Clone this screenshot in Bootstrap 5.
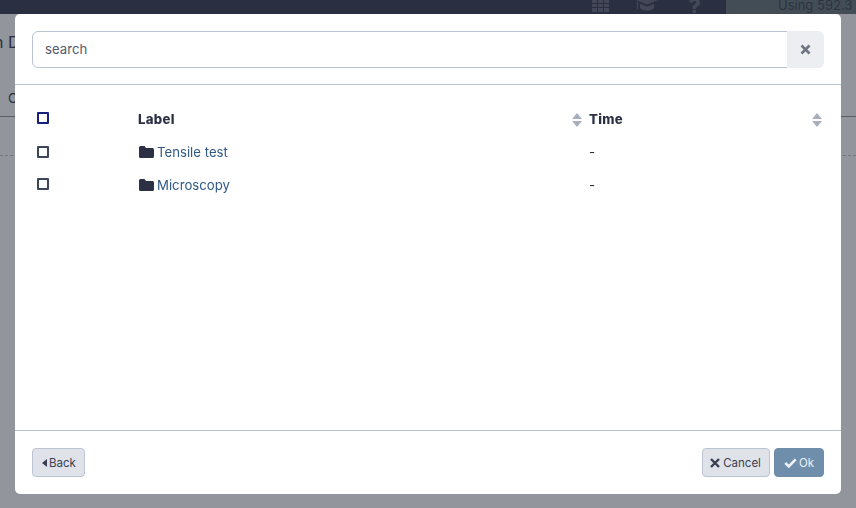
<!DOCTYPE html>
<html lang="en">
<head>
<meta charset="utf-8">
<title>Select</title>
<link rel="stylesheet" href="https://cdn.jsdelivr.net/npm/bootstrap@5.3.0/dist/css/bootstrap.min.css">
<style>
html,body{height:100%;overflow:hidden;}
body{font-family:Inter,"Liberation Sans",sans-serif;font-size:13.2px;color:#2b3044;background:#fff;}
.app-top{height:14px;background:#2e3349;overflow:hidden;}
.app-icons{color:#5f6372;}
.top-ico{display:block;}
.top-ico-grid{margin-right:27px;}
.top-ico-cap{margin-right:31px;}
.top-ico-q{margin-right:26px;}
.quota{width:130px;height:14px;background:#5d6f70;color:#333b4c;padding-left:52px;font-size:13px;line-height:11px;white-space:nowrap;overflow:hidden;}
.app-title{font-size:16px;padding:16px 0 0 0;height:59px;margin-left:-6px;white-space:nowrap;}
.app-tabs{height:44px;padding:16px 0 0 8px;border-bottom:1px solid #8d8f97;}
.app-dots{margin-top:38px;border-top:1px dashed #c2c4c9;}
.shade{position:fixed;inset:0;background:rgba(40,44,60,.5);z-index:1040;}
.sheet{position:fixed;left:15px;top:14px;width:826px;height:480px;z-index:1050;border:0;border-radius:5px;background:#fff;}
.sheet .modal-header{height:71px;padding:17px 17px 16px;border-bottom:1px solid #bcc5d3;}
.sheet .modal-body{padding:17px 17px 0;}
.sheet .modal-footer{height:64px;padding:17px;border-top:1px solid #b6c3cf;}
.sheet .modal-footer>*{margin:0;}
.find-input{height:37px;font-size:13.2px;color:#555a6b;padding:4px 12px 6px;border:1px solid #bcc3d0;border-radius:6px 0 0 6px;}
.find-input::placeholder{color:#555a6b;opacity:1;}
.find-clear{flex:0 0 37px;width:37px;height:37px;padding:0;background:#eceef2;border:0;border-radius:0 6px 6px 0;color:#6f7482;display:flex;align-items:center;justify-content:center;}
.pick-table{table-layout:fixed;width:792px;margin:0;--bs-table-bg:transparent;}
.pick-table th,.pick-table td{border:0;padding:0 6px;vertical-align:middle;height:33px;font-size:13.2px;color:#2b3044;}
.pick-table th{font-weight:800;height:34px;padding-top:2px;letter-spacing:.3px;}
.pick-table td{padding-top:1px;}
.pick-table .w-check{width:100px;padding:0 6px 2px 5px;}
.pick-table tbody tr:last-child .w-check{padding-bottom:4px;}
.pick-table .w-time{width:241px;}
.pick-table a{color:#2f5a85;text-decoration:none;margin-left:3px;}
.pick-box{appearance:none;-webkit-appearance:none;display:block;width:12px;height:12px;margin:0;border:2px solid #3f4558;border-radius:1px;background:#fff;}
.pick-all{border-color:#15207f;}
.sort-ico{display:block;margin-right:-4px;}
.sort-first{margin-right:-5px;}
.folder-ico{vertical-align:-1px;margin-left:1px;}
.act-btn{height:29px;font-size:11.5px;padding:2px 8px 0 7px;display:inline-flex;align-items:center;gap:3px;border-radius:4px;line-height:1;}
.act-btn svg{margin-top:-2px;}
.act-plain{background:#dfe2e8;border:1px solid #bcc5d3;color:#3a3f52;}
.act-back{padding-left:9px;gap:2px;}
.act-ok{background:#6f8eab;border:1px solid #6f8eab;color:#eef2f6;margin-left:4px!important;padding:2px 9px 0 9px;gap:2px;}
.act-plain:hover{background:#dfe2e8;color:#3a3f52;border-color:#bcc5d3;}
.act-ok:hover{background:#6f8eab;color:#eef2f6;border-color:#6f8eab;}
</style>
</head>
<body>
<div class="app-top d-flex justify-content-end align-items-start">
  <div class="app-icons d-flex align-items-start">
    <svg class="top-ico top-ico-grid" width="17" height="12" viewBox="0 0 17 12" fill="currentColor"><rect width="5" height="3"/><rect x="6" width="5" height="3"/><rect x="12" width="5" height="3"/><rect y="4" width="5" height="3"/><rect x="6" y="4" width="5" height="3"/><rect x="12" y="4" width="5" height="3"/><rect y="8" width="5" height="4"/><rect x="6" y="8" width="5" height="4"/><rect x="12" y="8" width="5" height="4"/></svg>
    <svg class="top-ico top-ico-cap" width="22" height="12" viewBox="0 0 22 12" fill="currentColor"><path d="M0 0 11 4.500 22 0zM4 3.800l7 3 7-3V8c-3 3.500-11 3.500-14 0zM1 1.500h1V9H1z"/></svg>
    <svg class="top-ico top-ico-q" width="11" height="13" viewBox="0 0 11 13" fill="currentColor"><path d="M0 1.500C1-1 3-2 5.500-2 9-2 11 0 11 2.500c0 2-1 3-2.500 4C7 7.500 7 8 7 9H3.500c0-2 .5-3.500 2-4.500C6.800 3.600 7.200 3 7.200 2.300 7.200 1.500 6.500 1 5.500 1 4.300 1 3.500 1.700 2.800 3z"/><rect x="3.500" y="10" width="3.500" height="3"/></svg>
  </div>
  <div class="quota">Using 592.3</div>
</div>
<div class="app-title">n Data</div>
<div class="app-tabs">Overview</div>
<div class="app-dots"></div>

<div class="shade"></div>

<div class="modal-content sheet" role="dialog">
  <div class="modal-header">
    <div class="input-group flex-nowrap">
      <input class="form-control find-input" type="text" placeholder="search">
      <button class="btn find-clear" type="button" aria-label="Clear">
        <svg width="11" height="11" viewBox="0 0 11 11"><path d="M1.500 1.500l8 8M9.500 1.500l-8 8" stroke="currentColor" stroke-width="2.600"/></svg>
      </button>
    </div>
  </div>
  <div class="modal-body">
    <table class="table pick-table">
      <colgroup><col class="w-check"><col><col class="w-time"></colgroup>
      <thead>
        <tr>
          <th class="w-check"><input class="pick-box pick-all" type="checkbox" aria-label="All"></th>
          <th><div class="d-flex justify-content-between align-items-center">Label
            <svg class="sort-ico sort-first" width="10" height="14" viewBox="0 0 10 14" fill="#a9b0bd"><path d="M5 0l5 6H0zM5 14l5-6H0z"/></svg></div></th>
          <th><div class="d-flex justify-content-between align-items-center">Time
            <svg class="sort-ico" width="10" height="14" viewBox="0 0 10 14" fill="#a9b0bd"><path d="M5 0l5 6H0zM5 14l5-6H0z"/></svg></div></th>
        </tr>
      </thead>
      <tbody>
        <tr>
          <td class="w-check"><input class="pick-box" type="checkbox" aria-label="Tensile test"></td>
          <td><svg class="folder-ico" width="15" height="12" viewBox="0 0 15 12" fill="#2b3044"><path d="M1.500 0h4l1.500 2h6.500A1.500 1.500 0 0 1 15 3.500v7a1.500 1.500 0 0 1-1.500 1.500h-12A1.500 1.500 0 0 1 0 10.500v-9A1.500 1.500 0 0 1 1.500 0z"/></svg><a href="#">Tensile test</a></td>
          <td>-</td>
        </tr>
        <tr>
          <td class="w-check"><input class="pick-box" type="checkbox" aria-label="Microscopy"></td>
          <td><svg class="folder-ico" width="15" height="12" viewBox="0 0 15 12" fill="#2b3044"><path d="M1.500 0h4l1.500 2h6.500A1.500 1.500 0 0 1 15 3.500v7a1.500 1.500 0 0 1-1.500 1.500h-12A1.500 1.500 0 0 1 0 10.500v-9A1.500 1.500 0 0 1 1.500 0z"/></svg><a href="#">Microscopy</a></td>
          <td>-</td>
        </tr>
      </tbody>
    </table>
  </div>
  <div class="modal-footer justify-content-between">
    <button class="btn act-btn act-plain act-back" type="button">
      <svg width="5" height="8" viewBox="0 0 5 8" fill="currentColor"><path d="M5 0v8L0 4z"/></svg>Back
    </button>
    <div class="d-flex">
      <button class="btn act-btn act-plain" type="button">
        <svg width="10" height="10" viewBox="0 0 10 10"><path d="M1 1l8 8M9 1l-8 8" stroke="currentColor" stroke-width="2.400"/></svg>Cancel
      </button>
      <button class="btn act-btn act-ok" type="button">
        <svg width="13" height="10" viewBox="0 0 13 10"><path d="M1.300 5l3.500 3.400L11.700 1.300" fill="none" stroke="currentColor" stroke-width="2.600"/></svg>Ok
      </button>
    </div>
  </div>
</div>
<script src="https://cdn.jsdelivr.net/npm/bootstrap@5.3.0/dist/js/bootstrap.bundle.min.js"></script>
</body>
</html>
